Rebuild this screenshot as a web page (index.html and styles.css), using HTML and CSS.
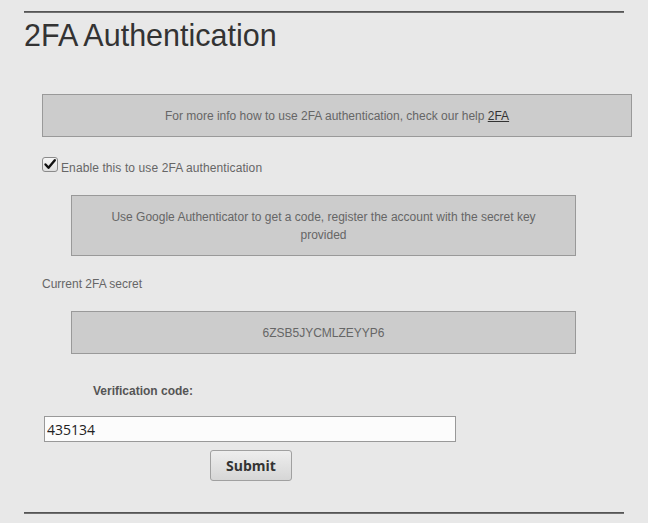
FILE: index.html
```html
<!DOCTYPE html>
<html lang="en">
<head>
<meta charset="utf-8">
<title>2FA Authentication</title>
<link rel="stylesheet" href="styles.css">
</head>
<body>
<div class="page">
  <div class="rule rule-top"></div>
  <h1 class="title">2FA Authentication</h1>
  <div class="content">
    <div class="box box-wide">For more info how to use 2FA authentication, check our help <a class="link" href="#">2FA</a></div>
    <label class="check-row">
      <span class="checkbox">
        <svg width="16" height="15" viewBox="0 0 16 15" aria-hidden="true">
          <path d="M3.5 7.5 L6.5 10.8 L12.8 3.2" fill="none" stroke="#111" stroke-width="2.4" stroke-linecap="round" stroke-linejoin="round"/>
        </svg>
      </span>
      <span class="check-label">Enable this to use 2FA authentication</span>
    </label>
    <div class="box box-inset box-two">Use Google Authenticator to get a code, register the account with the secret key provided</div>
    <div class="plain-label">Current 2FA secret</div>
    <div class="box box-inset box-secret">6ZSB5JYCMLZEYYP6</div>
    <form class="verify">
      <div class="verify-label">Verification code:</div>
      <input class="code-input" type="text" value="435134">
      <button class="submit" type="button">Submit</button>
    </form>
  </div>
  <div class="rule rule-bottom"></div>
</div>
</body>
</html>
```
FILE: styles.css
```css
html, body {
  margin: 0;
  padding: 0;
}
body {
  background: #e8e8e8;
  font-family: "Liberation Sans", Arial, sans-serif;
  font-size: 12px;
  color: #666;
}
.page {
  width: 600px;
  margin-left: 24px;
  padding-top: 11px;
}
.rule {
  height: 0;
  border-top: 1px solid #555;
  border-bottom: 1px solid #707070;
}
.title {
  margin: 5px 0 0;
  font-size: 30.5px;
  font-weight: normal;
  line-height: 34px;
  color: #333;
}
.content {
  padding-left: 18px;
}
.box {
  box-sizing: border-box;
  background: #cccccc;
  border: 1px solid #999;
  color: #666;
  text-align: center;
  line-height: 18px;
  padding: 12px 30px 11px;
}
.box-wide {
  width: 590px;
  margin-top: 42px;
}
.link {
  color: #333;
  text-decoration: underline;
}
.check-row {
  display: flex;
  align-items: flex-start;
  gap: 3px;
  margin-top: 20px;
  height: 17px;
}
.checkbox {
  box-sizing: border-box;
  width: 16px;
  height: 15px;
  border: 1px solid #8a8a8a;
  border-radius: 3px;
  background: linear-gradient(#f6f6f6, #dedede);
  display: flex;
  align-items: center;
  justify-content: center;
  overflow: hidden;
}
.checkbox svg {
  display: block;
  flex: none;
}
.check-label {
  margin-top: 4px;
  line-height: 15px;
  color: #666;
  letter-spacing: 0.1px;
}
.box-inset {
  width: 505px;
  margin-left: 29px;
}
.box-two {
  margin-top: 21px;
}
.plain-label {
  margin-top: 21px;
  line-height: 15px;
  color: #666;
}
.box-secret {
  margin-top: 19px;
}
.verify {
  margin: 0;
  display: flex;
  flex-direction: column;
  align-items: flex-start;
}
.verify-label {
  margin-top: 30px;
  margin-left: 51px;
  line-height: 15px;
  font-weight: bold;
  color: #555;
}
.code-input {
  box-sizing: border-box;
  width: 412px;
  height: 26px;
  margin: 17px 0 0 2px;
  padding: 0 2px;
  border: 1px solid #999;
  border-radius: 0;
  background: #fcfcfc;
  font-family: "Open Sans", sans-serif;
  font-size: 14px;
  color: #222;
  outline: none;
}
.submit {
  box-sizing: border-box;
  width: 82px;
  height: 31px;
  margin: 8px 0 0 168px;
  padding: 0;
  border: 1px solid #a0a0a0;
  border-radius: 3px;
  background: linear-gradient(#eeeeee, #d6d6d6);
  font-family: "Open Sans", sans-serif;
  font-size: 14px;
  font-weight: bold;
  color: #333;
}
.rule-bottom {
  margin-top: 31px;
}
```
